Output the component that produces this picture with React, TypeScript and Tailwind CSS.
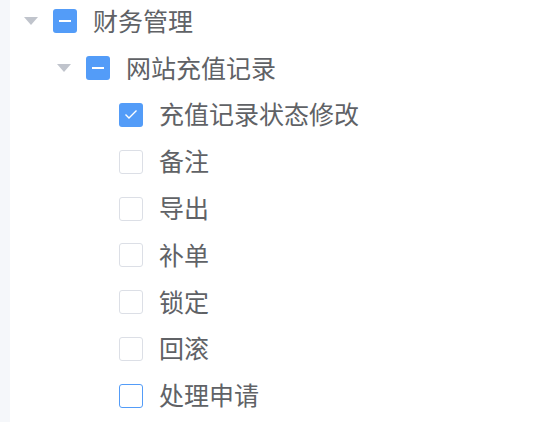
import React from "react";

type Node = {
  label: string;
  level: number;
  state: "checked" | "indeterminate" | "unchecked";
  expandable?: boolean;
  focused?: boolean;
};

const nodes: Node[] = [
  { label: "财务管理", level: 0, state: "indeterminate", expandable: true },
  { label: "网站充值记录", level: 1, state: "indeterminate", expandable: true },
  { label: "充值记录状态修改", level: 2, state: "checked" },
  { label: "备注", level: 2, state: "unchecked" },
  { label: "导出", level: 2, state: "unchecked" },
  { label: "补单", level: 2, state: "unchecked" },
  { label: "锁定", level: 2, state: "unchecked" },
  { label: "回滚", level: 2, state: "unchecked" },
  { label: "处理申请", level: 2, state: "unchecked", focused: true },
];

const indents = ["pl-[24px]", "pl-[57px]", "pl-[90px]"];

function Checkbox({ state, focused }: { state: Node["state"]; focused?: boolean }) {
  if (state === "checked") {
    return (
      <span className="flex h-[24px] w-[24px] shrink-0 items-center justify-center rounded-[3px] bg-[#539cf8]">
        <svg width="14" height="11" viewBox="0 0 14 11" fill="none">
          <path d="M1.5 5.5 L5 9 L12.5 1.5" stroke="white" strokeWidth="1.4" />
        </svg>
      </span>
    );
  }
  if (state === "indeterminate") {
    return (
      <span className="flex h-[24px] w-[24px] shrink-0 items-center justify-center rounded-[3px] bg-[#539cf8]">
        <span className="h-[2px] w-[12px] bg-white" />
      </span>
    );
  }
  return (
    <span
      className={`h-[24px] w-[24px] shrink-0 rounded-[3px] border bg-white ${
        focused ? "border-[#539cf8]" : "border-[#dcdfe6]"
      }`}
    />
  );
}

export default function App() {
  return (
    <div className="flex h-[422px] w-[536px] bg-white" style={{ fontFamily: '"Noto Sans CJK SC", "Noto Sans", sans-serif' }}>
      <div className="w-[10px] shrink-0 bg-[#f5f7fa]" />
      <div className="-mt-[2px] flex-1">
        {nodes.map((node) => (
          <div key={node.label} className={`flex h-[46.8px] items-center ${indents[node.level]} -ml-[10px]`}>
            <span className="mr-[15px] flex w-[14px] shrink-0 justify-center">
              {node.expandable ? (
                <svg width="14" height="8" viewBox="0 0 14 8">
                  <polygon points="0,0 14,0 7,8" fill="#c0c4cc" />
                </svg>
              ) : (
                <span className="h-[8px] w-[14px]" />
              )}
            </span>
            <Checkbox state={node.state} focused={node.focused} />
            <span className="ml-[16px] -mt-[2px] text-[25px] leading-none text-[#606266]">{node.label}</span>
          </div>
        ))}
      </div>
    </div>
  );
}
